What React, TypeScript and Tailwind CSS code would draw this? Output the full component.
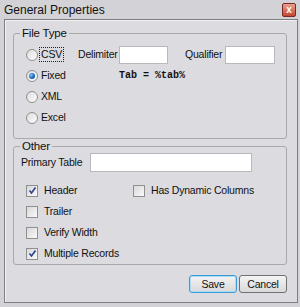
import type { ReactNode } from 'react';

function Radio({ checked, label, focus }: { checked?: boolean; label: string; focus?: boolean }) {
  return (
    <div className="h-[21px] flex items-center">
      <span className="w-[12px] h-[12px] rounded-full border border-[#8e8f8f] bg-gradient-to-br from-[#dcdcdc] to-[#ffffff] flex items-center justify-center">
        {checked && <span className="w-[6px] h-[6px] rounded-full bg-[radial-gradient(circle_at_35%_35%,#7fc3ff,#1561b8_60%,#0a3d7a)]" />}
      </span>
      <span className={`ml-[1px] px-[1px] leading-[13px] border ${focus ? 'border-dotted border-[#222]' : 'border-transparent'}`}>
        {label}
      </span>
    </div>
  );
}

function Check({ checked, label }: { checked?: boolean; label: string }) {
  return (
    <div className="h-[21px] flex items-center">
      <span className="w-[12px] h-[12px] border border-[#8e8f8f] bg-gradient-to-br from-[#d8d8d8] to-[#fafafa] flex items-center justify-center">
        {checked && (
          <svg width="9" height="9" viewBox="0 0 9 9">
            <path d="M1.5 4.5 L3.5 7 L7.5 1.5" fill="none" stroke="#2c3f8c" strokeWidth="1.6" />
          </svg>
        )}
      </span>
      <span className="ml-[6px]">{label}</span>
    </div>
  );
}

function Group({ title, className, children }: { title: string; className: string; children: ReactNode }) {
  return (
    <fieldset className={`w-[274px] border border-[#a9a9a9] rounded-[3px] ${className}`}>
      <legend className="ml-[6px] px-[2px] text-[11.5px] leading-[14px]">{title}</legend>
      {children}
    </fieldset>
  );
}

function Input({ w, h }: { w: string; h: string }) {
  return <div className={`${w} ${h} shrink-0 bg-white border border-[#b8b9bd]`} />;
}

export default function App() {
  return (
    <div className="w-[300px] h-[307px] bg-[#d3d2d6] flex flex-col font-['Liberation_Sans',Arial,sans-serif] text-[10.5px] tracking-[-0.2px] text-[#111]">
      {/* title bar */}
      <div className="h-[19px] flex items-center justify-between pl-[4px] pr-[4px]">
        <span className="text-[12px] leading-[14px] tracking-normal">General Properties</span>
        <div className="w-[14px] h-[14px] rounded-[2px] border border-[#7a2a22] bg-gradient-to-b from-[#e7a08f] to-[#c5432f] flex items-center justify-center">
          <span className="text-white text-[10px] font-bold leading-none">x</span>
        </div>
      </div>

      {/* body */}
      <div className="ml-[4px] w-[294px] h-[284px] border border-[#7f7f7f] shadow-[inset_1px_1px_0_#f2f2f2] bg-[#dcdbdf] pl-[8px] pt-[6px]">
        <Group title="File Type" className="h-[113px]">
          <div className="flex pl-[12px] pt-[4px]">
            <div className="w-[52px] flex flex-col">
              <Radio label="CSV" focus />
              <Radio label="Fixed" checked />
              <Radio label="XML" />
              <Radio label="Excel" />
            </div>
            <div className="flex flex-col">
              <div className="h-[21px] flex items-center">
                <span className="w-[41px] whitespace-nowrap">Delimiter</span>
                <Input w="w-[49px]" h="h-[18px]" />
                <span className="ml-[17px] w-[40px] whitespace-nowrap">Qualifier</span>
                <Input w="w-[50px]" h="h-[18px]" />
              </div>
              <div className="h-[21px] flex items-center pl-[41px] font-['Liberation_Mono',monospace] text-[10px] tracking-normal font-bold">
                Tab = %tab%
              </div>
            </div>
          </div>
        </Group>

        <Group title="Other" className="h-[126px]">
          <div className="pl-[7px]">
            <div className="h-[19px] flex items-center">
              <span className="w-[69px]">Primary Table</span>
              <Input w="w-[162px]" h="h-[19px]" />
            </div>
            <div className="mt-[8px] pl-[5px] flex">
              <div className="w-[107px] flex flex-col">
                <Check label="Header" checked />
                <Check label="Trailer" />
                <Check label="Verify Width" />
                <Check label="Multiple Records" checked />
              </div>
              <div className="flex flex-col">
                <Check label="Has Dynamic Columns" />
              </div>
            </div>
          </div>
        </Group>

        <div className="w-[274px] mt-[10px] flex justify-end gap-[2px]">
          <button className="w-[48px] h-[18px] rounded-[3px] border border-[#3c9ad8] shadow-[inset_0_0_0_1px_#a8dcf8] bg-gradient-to-b from-[#f4f4f4] to-[#d9d9d9] leading-none">
            Save
          </button>
          <button className="w-[48px] h-[18px] rounded-[3px] border border-[#707070] bg-gradient-to-b from-[#f4f4f4] to-[#d9d9d9] leading-none">
            Cancel
          </button>
        </div>
      </div>
    </div>
  );
}
